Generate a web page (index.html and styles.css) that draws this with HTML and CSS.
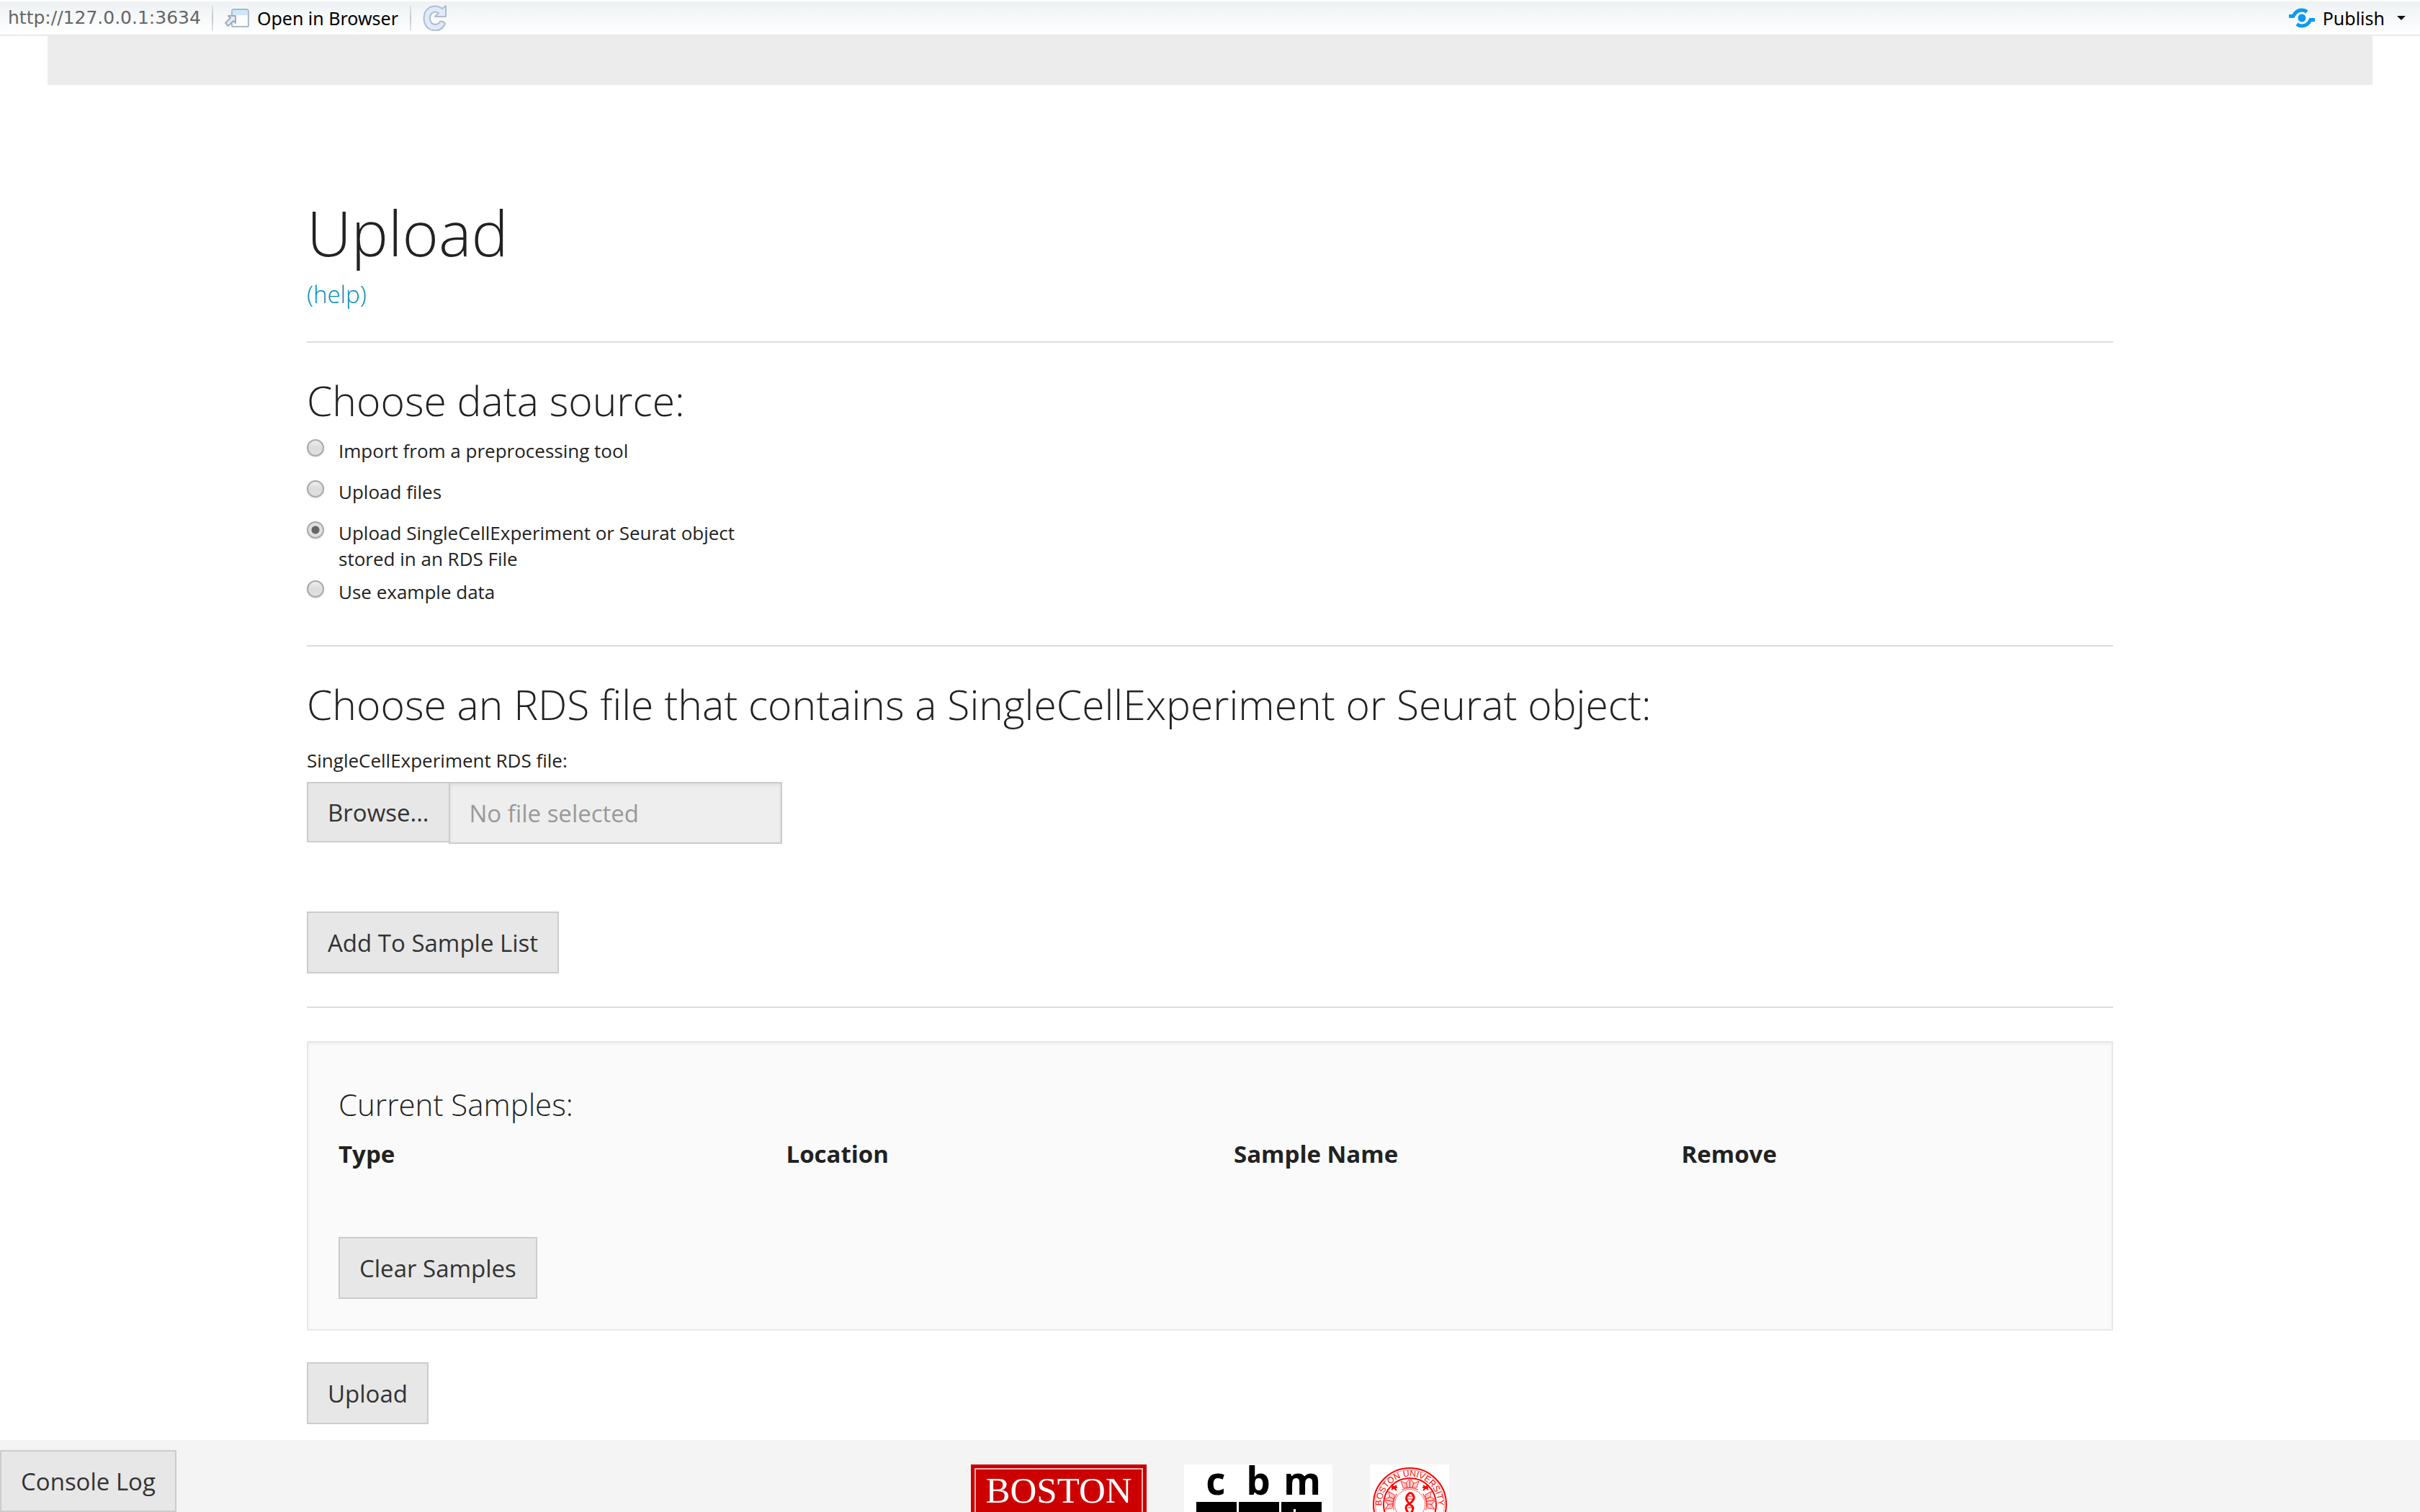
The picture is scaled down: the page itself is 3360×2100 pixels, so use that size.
FILE: index.html
```html
<!DOCTYPE html>
<html lang="en">
<head>
<meta charset="utf-8">
<title>Upload</title>
<link rel="stylesheet" href="styles.css">
</head>
<body>
<header class="toolbar">
  <span class="url">http://127.0.0.1:3634</span>
  <span class="sep"></span>
  <button type="button" class="tool open">
    <svg width="34" height="26" viewBox="0 0 34 26" aria-hidden="true">
      <path d="M10 4q0-3 3-3h17q3 0 3 3v20q0 1-1 1H11q-1 0-1-1z" fill="#fcfdfe" stroke="#a9bac6" stroke-width="2"/>
      <path d="M11 9V4q0-2 2-2h17q2 0 2 2v5z" fill="#cfe6fc"/>
      <path d="M5 10h10v10l-3-3-7 7-4-4 7-7z" fill="#e6ebef" stroke="#a0adb8" stroke-width="2" stroke-linejoin="round"/>
    </svg>
    Open in Browser
  </button>
  <span class="sep"></span>
  <button type="button" class="tool" aria-label="Refresh">
    <svg width="34" height="36" viewBox="0 0 34 36" aria-hidden="true">
      <path d="M27 5l5-4v15H17l5-5q-5-3-9 0-4 4-3 9 1 6 7 7 5 0 7-4 5-1 7 3-4 9-14 9.500Q3 34 1.500 20 1 8 10 3q9-4 17 2z" fill="#e1eafb" stroke="#b2bccb" stroke-width="2" stroke-linejoin="round"/>
    </svg>
  </button>
  <button type="button" class="tool publish">
    <svg width="36" height="28" viewBox="0 0 36 28" aria-hidden="true">
      <g fill="none" stroke="#0d9bf0" stroke-width="5">
        <path d="M0 11.500h6q4-8.500 12-8.500 4 0 7 2.500"/>
        <path d="M36 16.500h-6q-4 8.500-12 8.500-4 0-7-2.500"/>
      </g>
      <circle cx="18" cy="14" r="5.500" fill="#0d9bf0"/>
    </svg>
    Publish
    <svg class="caret" width="12" height="6" viewBox="0 0 12 6" aria-hidden="true"><path d="M0 0h12L6 6z" fill="#111"/></svg>
  </button>
</header>
<div class="viewer">
  <div class="navband"></div>
  <main class="content">
    <h1>Upload</h1>
    <a class="help" href="#help">(help)</a>
    <hr>
    <h3 id="source">Choose data source:</h3>
    <ul class="options" role="radiogroup" aria-labelledby="source">
      <li><label><input type="radio" name="source"><span>Import from a preprocessing tool</span></label></li>
      <li><label><input type="radio" name="source"><span>Upload files</span></label></li>
      <li><label><input type="radio" name="source" checked><span>Upload SingleCellExperiment or Seurat object stored in an RDS File</span></label></li>
      <li><label><input type="radio" name="source"><span>Use example data</span></label></li>
    </ul>
    <hr>
    <h3>Choose an RDS file that contains a SingleCellExperiment or Seurat object:</h3>
    <label class="file-label" for="rds">SingleCellExperiment RDS file:</label>
    <div class="file-group">
      <button type="button" class="btn browse">Browse...</button>
      <input type="text" id="rds" class="file-name" placeholder="No file selected" readonly>
    </div>
    <button type="button" class="btn add">Add To Sample List</button>
    <hr>
    <section class="well">
      <h4>Current Samples:</h4>
      <table class="samples">
        <thead>
          <tr><th>Type</th><th>Location</th><th>Sample Name</th><th>Remove</th></tr>
        </thead>
      </table>
      <button type="button" class="btn">Clear Samples</button>
    </section>
    <button type="button" class="btn">Upload</button>
  </main>
  <footer class="footer">
    <svg width="244" height="110" viewBox="0 0 244 110" role="img" aria-label="Boston University">
      <rect width="244" height="110" fill="#c00"/>
      <rect x="6" y="6" width="232" height="98" fill="none" stroke="#efb0b0" stroke-width="2"/>
      <text x="122" y="53" class="bu">BOSTON</text>
    </svg>
    <svg width="206" height="110" viewBox="0 0 206 110" role="img" aria-label="cbm">
      <rect width="206" height="110" fill="#fff"/>
      <g class="cbm">
        <text x="44" y="42">c</text><text x="103" y="42">b</text><text x="164" y="42">m</text>
      </g>
      <path d="M17 52h56v58H17zM76 52h56v58H76zM135 52h56v58h-56z"/>
      <path d="M152 62h3v48h-3z" fill="#fff"/>
    </svg>
    <svg width="110" height="110" viewBox="0 0 110 110" role="img" aria-label="Boston University School of Medicine seal">
      <defs>
        <path id="ring" d="M16.500 55.500a39 39 0 0 1 78 0"/>
        <g id="crown">
          <path d="M46 32l-3-9 7 3 5.500-7 5.500 7 7-3-3 9z" fill="#ffc9c9" stroke="#f44" stroke-width="1"/>
          <path d="M44 35q11-5 23 0M50 25l2 7M55.500 21v11M61 25l-2 7" fill="none" stroke="#f22" stroke-width="1"/>
        </g>
      </defs>
      <rect width="110" height="110" fill="#fff"/>
      <g fill="none" stroke="red">
        <circle cx="55.500" cy="55.500" r="50.500" stroke-width="2"/>
        <circle cx="55.500" cy="55.500" r="48" stroke-width="1" stroke="#f88"/>
        <circle cx="55.500" cy="55.500" r="36.500" stroke-width="2"/>
        <circle cx="55.500" cy="55.500" r="21" stroke-width="1" stroke="#f66"/>
      </g>
      <use href="#crown"/>
      <use href="#crown" transform="rotate(-80 55.500 55.500)"/>
      <use href="#crown" transform="rotate(80 55.500 55.500)"/>
      <path d="M30 28l7 8M37 29l-7 6M30 32h8M81 28l-7 8M74 29l7 6M81 32h-8" stroke="red" stroke-width="2"/>
      <path d="M56 39q-7 5-5 10t8 9q3 4-4 12M56 39q6 3 5 8t-10 10q-3 5 4 12" fill="none" stroke="red" stroke-width="3"/>
      <path d="M53 44h7M52 48h8M53 60h7" stroke="red" stroke-width="1"/>
      <text class="seal"><textPath href="#ring" startOffset="50%">BOSTON UNIVERSITY</textPath></text>
    </svg>
  </footer>
  <button type="button" class="btn console">Console Log</button>
</div>
</body>
</html>
```
FILE: styles.css
```css
* { box-sizing: border-box; }

body {
  margin: 0;
  height: 100vh;
  display: flex;
  flex-direction: column;
  background: #fff;
  color: #222;
  font-family: "Open Sans", sans-serif;
  font-size: 33px;
  line-height: 46px;
}

button, input { font: inherit; }

.toolbar {
  flex: none;
  display: flex;
  align-items: center;
  height: 50px;
  padding: 0 20px 0 11px;
  border-top: 2px solid #fdfdfd;
  border-bottom: 2px solid #e9e9ef;
  background: linear-gradient(#eef2f4, #fff);
  font: 25px/40px "Noto Sans", sans-serif;
}

.url {
  width: 283px;
  color: #666;
  font-family: "DejaVu Sans", sans-serif;
}

.sep {
  width: 2px;
  height: 36px;
  background: linear-gradient(#e4e6e8, #c4c6c8, #e4e6e8);
}

.tool {
  display: flex;
  align-items: center;
  gap: 11px;
  padding: 0 16px;
  border: 0;
  background: none;
  color: #000;
}

.open { width: 273px; white-space: nowrap; }

.publish { margin-left: auto; padding: 0; }

.caret { margin-left: 6px; }

.viewer {
  position: relative;
  flex: 1;
  min-height: 0;
  overflow: hidden;
}

.navband {
  height: 68px;
  margin: 0 66px;
  background: #ececec;
}

.content {
  max-width: 2508px;
  margin: 144px auto 22px;
}

h1, h3, h4 { margin: 0; font-weight: 300; }

h1 { margin-bottom: 6px; font-size: 86px; line-height: 122px; }
h3 { margin-bottom: 18px; font-size: 57px; line-height: 68px; }
h4 { padding-top: 18px; margin-bottom: 20px; font-size: 42px; line-height: 52px; }

hr {
  height: 2px;
  margin: 46px 0;
  border: 0;
  background: #ddd;
}

.help {
  display: block;
  width: max-content;
  color: #008cba;
  font-weight: 300;
  line-height: 38px;
  text-decoration: none;
}

.options {
  width: 660px;
  margin: 0;
  padding: 0;
  list-style: none;
  font-size: 26px;
  line-height: 36px;
}

.options li { min-height: 57px; padding-bottom: 10px; }
.options li:last-child { min-height: 0; }

.options label {
  display: flex;
  align-items: flex-start;
  gap: 20px;
}

.options input {
  flex: none;
  appearance: none;
  width: 24px;
  height: 24px;
  margin: 2px 0 0;
  border: 2px solid #aaa;
  border-radius: 50%;
  background: linear-gradient(#eee, #dcdcdc 50%, #e0e0e0);
  box-shadow: 0 1px 2px #ddd;
}

.options input:checked {
  background: radial-gradient(circle, #666 5px, #e0e0e0 6px);
}

.options span { width: 580px; }

.file-label {
  display: block;
  margin-bottom: 4px;
  font-size: 26px;
  line-height: 52px;
}

.file-group {
  display: flex;
  align-items: flex-start;
  width: 660px;
}

.btn {
  display: block;
  height: 86px;
  padding: 2px 27px 0;
  border: 2px solid #ccc;
  background: #e7e7e7;
  color: #333;
}

.browse { height: 84px; border-right: 0; }

.file-name {
  flex: 1;
  min-width: 0;
  height: 86px;
  padding: 0 27px;
  border: 2px solid #ccc;
  border-radius: 0;
  background: #eee;
  box-shadow: inset 0 2px 4px rgba(0, 0, 0, 0.08);
}

.file-name::placeholder { color: #999; opacity: 1; }

.add { margin-top: 94px; }

.well {
  margin-bottom: 44px;
  padding: 42px;
  border: 2px solid #e8e8e8;
  background: #fafafa;
  box-shadow: inset 0 2px 4px rgba(0, 0, 0, 0.05);
}

.samples {
  width: calc(100% + 66px);
  margin-bottom: 92px;
  border-collapse: collapse;
  table-layout: fixed;
}

.samples th { padding: 0; text-align: left; font-weight: 700; }

.footer {
  display: flex;
  justify-content: center;
  gap: 52px;
  padding: 34px 0;
  background: #f4f4f4;
}

.footer svg { overflow: visible; }
.footer text { text-anchor: middle; }
.bu { fill: #fff; font: 51px "Liberation Serif", serif; }
.cbm { font: 700 53px "Open Sans", sans-serif; }
.seal { fill: #f00; font: 12px "Liberation Sans", sans-serif; }

.console { position: absolute; left: 0; bottom: 0; }
```
